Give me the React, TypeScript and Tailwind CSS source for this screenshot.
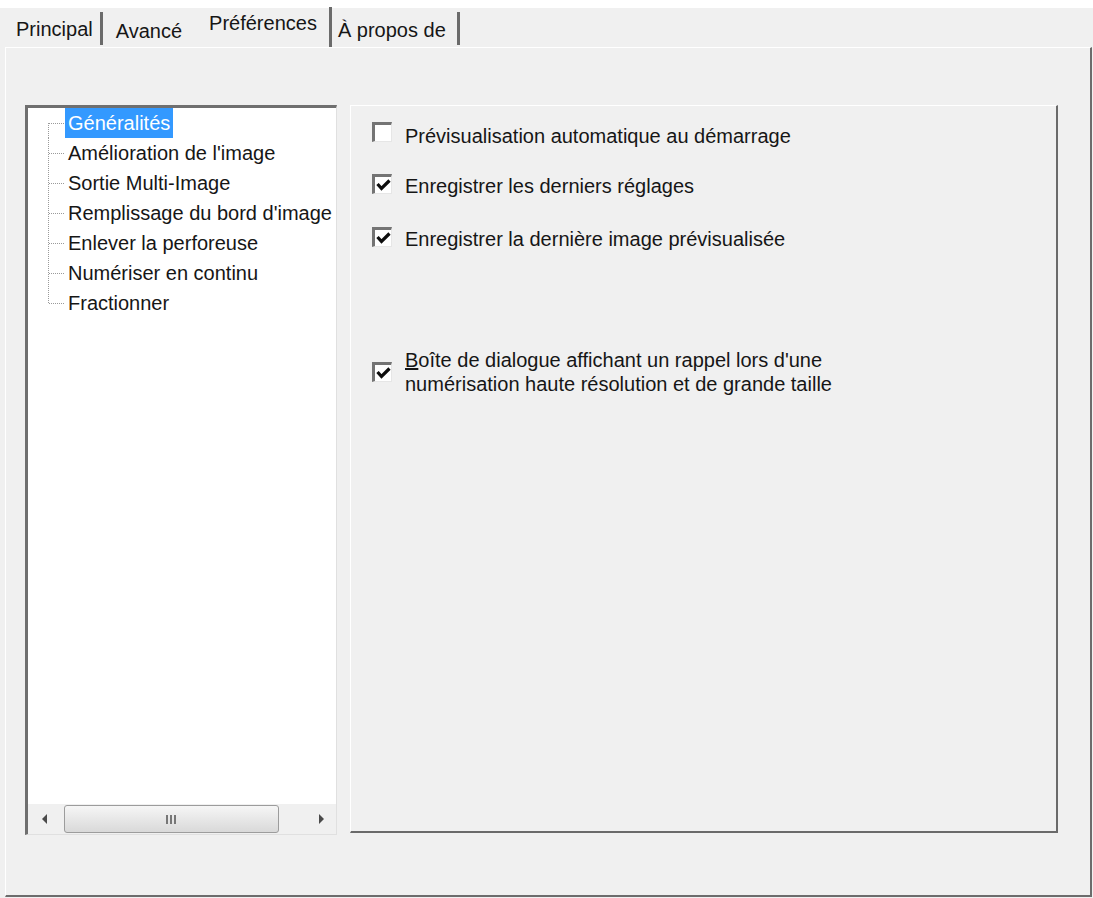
import React from "react";

const FONT = { fontFamily: '"Liberation Sans", Arial, sans-serif' };

function TreeLink({ first, last }: { first?: boolean; last?: boolean }) {
  return (
    <svg width="37" height="30" className="shrink-0" aria-hidden>
      <line
        x1="20.5"
        x2="20.5"
        y1={first ? 15 : 0}
        y2={last ? 15 : 30}
        stroke="#9a9a9a"
        strokeWidth="1"
        strokeDasharray="1 1"
      />
      <line x1="21" x2="36" y1="15.5" y2="15.5" stroke="#9a9a9a" strokeWidth="1" strokeDasharray="1 1" />
    </svg>
  );
}

const treeItems = [
  "Généralités",
  "Amélioration de l'image",
  "Sortie Multi-Image",
  "Remplissage du bord d'image",
  "Enlever la perforeuse",
  "Numériser en continu",
  "Fractionner",
];

function Check({ checked }: { checked?: boolean }) {
  return (
    <div className="w-[20px] h-[20px] shrink-0 bg-white border-t-[3px] border-l-[3px] border-[#747474] border-r border-b border-r-[#e6e6e6] border-b-[#e6e6e6] flex items-center justify-center">
      {checked && (
        <svg width="15" height="12" viewBox="0 0 15 12" aria-hidden>
          <polyline points="1.5,5 5.5,9.5 13.5,1.5" fill="none" stroke="#0d0d0d" strokeWidth="3.2" />
        </svg>
      )}
    </div>
  );
}

export default function App() {
  return (
    <div className="w-[1093px] h-[898px] bg-[#f0f0f0] text-[20px] text-[#161616] overflow-hidden" style={FONT}>
      <div className="h-[8px] bg-white" />
      {/* tab strip */}
      <div className="h-[39px] flex items-end pl-[5px]">
        <div className="pl-[11px] pr-[7px] border-r-[3px] border-[#6b6b6b] h-[33px] pt-[5px] mb-[2px] leading-[24px] whitespace-nowrap">
          Principal
        </div>
        <div className="pl-[13px] pr-[16px] h-[34px] pt-[6px] leading-[24px] whitespace-nowrap">Avancé</div>
        <div className="pl-[11px] pr-[12px] border-r-[3px] border-[#6b6b6b] h-[40px] pt-[4px] leading-[24px] whitespace-nowrap">
          Préférences
        </div>
        <div className="pl-[6px] pr-[11px] border-r-[3px] border-[#6b6b6b] h-[33px] pt-[6px] mb-[2px] leading-[24px] whitespace-nowrap">
          À propos de
        </div>
      </div>

      {/* tab page */}
      <div className="ml-[5px] w-[1087px] h-[850px] border-t border-l border-white border-r-2 border-b-2 border-r-[#6c6c6c] border-b-[#6c6c6c] pl-[19px] pt-[57px] flex items-start gap-[13px]">
        {/* tree view */}
        <div className="w-[312px] h-[730px] bg-white border-t-[3px] border-l-[3px] border-[#6f6f6f] border-r border-b border-r-[#e0e0e0] border-b-[#e0e0e0] flex flex-col">
          <div className="flex-1 flex flex-col">
            {treeItems.map((t, i) => (
              <div key={t} className="h-[30px] flex items-center">
                <TreeLink first={i === 0} last={i === treeItems.length - 1} />
                <span
                  className={
                    "px-[3px] h-[30px] leading-[30px] whitespace-nowrap " +
                    (i === 0 ? "bg-[#3399ff] text-white" : "")
                  }
                >
                  {t}
                </span>
              </div>
            ))}
          </div>
          {/* horizontal scrollbar */}
          <div className="h-[30px] bg-[#f0f0f0] flex items-center">
            <div className="w-[34px] h-full flex items-center justify-center">
              <svg width="6" height="10" viewBox="0 0 6 10" aria-hidden>
                <polygon points="5,0 0,5 5,10" fill="#4a4a4a" />
              </svg>
            </div>
            <div className="ml-[2px] w-[215px] h-[28px] rounded-[3px] border border-[#9c9c9c] bg-gradient-to-b from-[#f6f6f6] to-[#d9d9d9] flex items-center justify-center">
              <svg width="11" height="9" viewBox="0 0 11 9" aria-hidden>
                <rect x="0" y="0" width="2" height="9" fill="#777" />
                <rect x="4" y="0" width="2" height="9" fill="#777" />
                <rect x="8" y="0" width="2" height="9" fill="#777" />
              </svg>
            </div>
            <div className="flex-1" />
            <div className="w-[30px] h-full flex items-center justify-center">
              <svg width="6" height="10" viewBox="0 0 6 10" aria-hidden>
                <polygon points="1,0 6,5 1,10" fill="#4a4a4a" />
              </svg>
            </div>
          </div>
        </div>

        {/* options panel */}
        <div className="w-[708px] h-[728px] border-t border-l border-white border-r-2 border-b-2 border-r-[#6a6a6a] border-b-[#6a6a6a] pl-[21px] pt-[18px] flex flex-col">
          <div className="flex items-start gap-[13px] leading-[24px]">
            <div className="-mt-[2px]">
              <Check />
            </div>
            <span>Prévisualisation automatique au démarrage</span>
          </div>
          <div className="mt-[26px] flex items-start gap-[13px] leading-[24px]">
            <Check checked />
            <span>Enregistrer les derniers réglages</span>
          </div>
          <div className="mt-[29px] flex items-start gap-[13px] leading-[24px]">
            <Check checked />
            <span>Enregistrer la dernière image prévisualisée</span>
          </div>
          <div className="mt-[97px] flex items-center gap-[13px] leading-[24px]">
            <Check checked />
            <span>
              <span className="underline">B</span>oîte de dialogue affichant un rappel lors d'une
              <br />
              numérisation haute résolution et de grande taille
            </span>
          </div>
        </div>
      </div>
    </div>
  );
}
